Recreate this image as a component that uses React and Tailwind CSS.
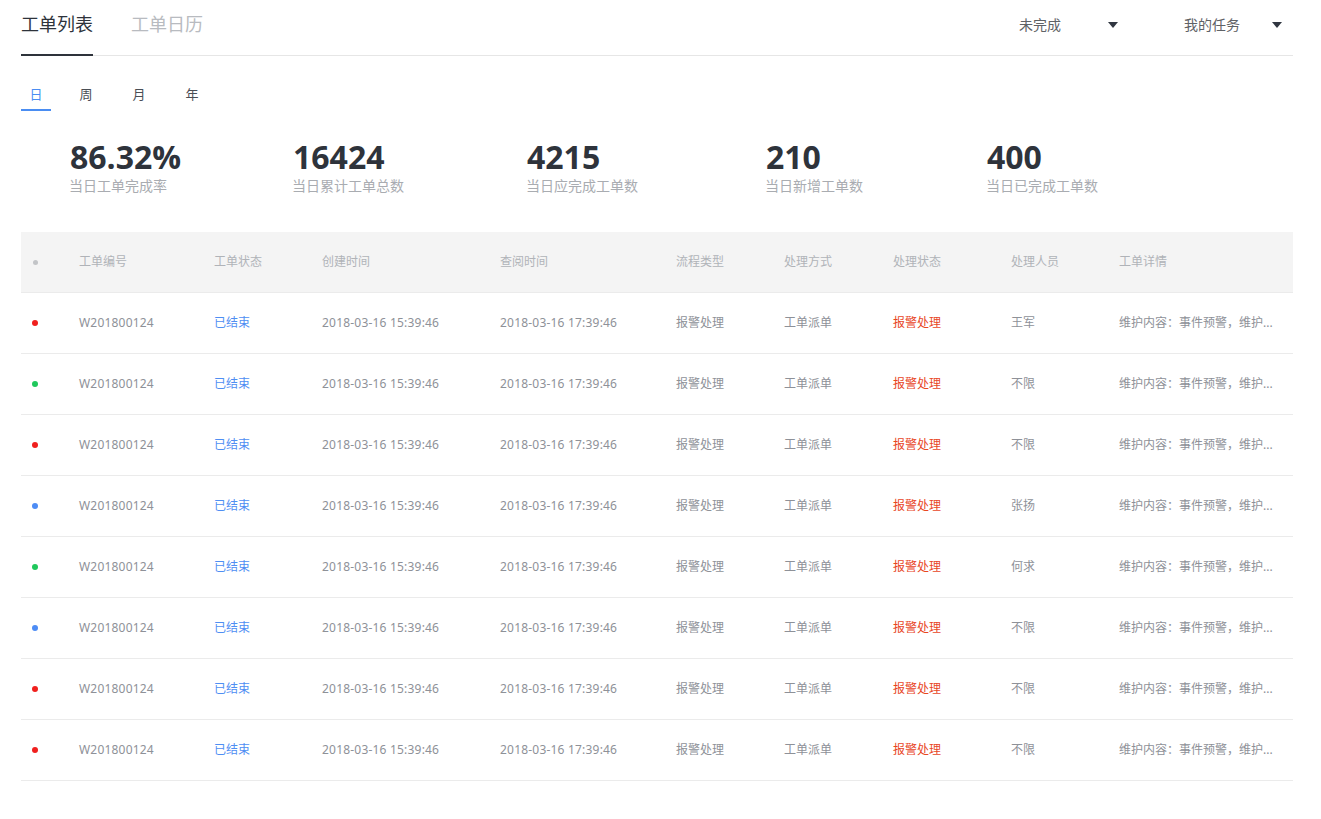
import React from "react";

const rows = [
  { dot: "bg-[#f0201e]", person: "王军" },
  { dot: "bg-[#1fc85c]", person: "不限" },
  { dot: "bg-[#f0201e]", person: "不限" },
  { dot: "bg-[#4d8cf5]", person: "张扬" },
  { dot: "bg-[#1fc85c]", person: "何求" },
  { dot: "bg-[#4d8cf5]", person: "不限" },
  { dot: "bg-[#f0201e]", person: "不限" },
  { dot: "bg-[#f0201e]", person: "不限" },
];

const stats = [
  { v: "86.32%", l: "当日工单完成率", w: "w-[223px]" },
  { v: "16424", l: "当日累计工单总数", w: "w-[234px]" },
  { v: "4215", l: "当日应完成工单数", w: "w-[239px]" },
  { v: "210", l: "当日新增工单数", w: "w-[221px]" },
  { v: "400", l: "当日已完成工单数", w: "w-[200px]" },
];

const grid =
  "grid grid-cols-[58px_135px_108px_178px_176px_108px_109px_118px_108px_1fr] items-center";

function Caret() {
  return (
    <svg width="10" height="6" viewBox="0 0 10 6" className="block">
      <path d="M0 0 L10 0 L5 6 Z" fill="#303640" />
    </svg>
  );
}

export default function App() {
  return (
    <div
      className="w-[1321px] min-h-[819px] bg-white pl-[21px] pr-[28px]"
      style={{ fontFamily: '"Noto Sans", "Noto Sans CJK SC", sans-serif' }}
    >
      {/* top tabs */}
      <div className="flex items-start justify-between border-b border-[#e6e6e6] h-[56px]">
        <div className="flex items-start gap-[38px]">
          <div className="h-[56px] pt-[11px] border-b-2 border-[#2e333b] text-[18px] leading-[26px] text-[#2e333b] w-[72px] -mb-px">
            工单列表
          </div>
          <div className="pt-[11px] text-[18px] leading-[26px] text-[#b8bbc0]">工单日历</div>
        </div>
        <div className="flex items-center gap-[66px] pt-[14px] pr-[11px]">
          <div className="flex items-center justify-between w-[99px] text-[14px] leading-[22px] text-[#5f6266]">
            <span>未完成</span>
            <Caret />
          </div>
          <div className="flex items-center justify-between w-[98px] text-[14px] leading-[22px] text-[#5f6266]">
            <span>我的任务</span>
            <Caret />
          </div>
        </div>
      </div>

      {/* period tabs */}
      <div className="flex mt-[28px] text-[13px] leading-[20px]">
        <div className="w-[30px] text-center pb-[5px] border-b-2 border-[#4a8df2] text-[#4a8df2]">日</div>
        <div className="ml-[20px] w-[30px] text-center pb-[5px] text-[#4a4e55]">周</div>
        <div className="ml-[23px] w-[30px] text-center pb-[5px] text-[#4a4e55]">月</div>
        <div className="ml-[23px] w-[30px] text-center pb-[5px] text-[#4a4e55]">年</div>
      </div>

      {/* stats */}
      <div className="flex pl-[48px] mt-[28px]">
        {stats.map((s) => (
          <div key={s.l} className={s.w}>
            <div
              className="text-[32px] leading-[36px] font-bold text-[#2e333b] pl-px"
              style={{ fontFamily: '"Open Sans", "Noto Sans", sans-serif' }}
            >
              {s.v}
            </div>
            <div className="mt-[1px] text-[14px] leading-[20px] text-[#a9acb1]">{s.l}</div>
          </div>
        ))}
      </div>

      {/* table */}
      <div className="mt-[36px] w-[1272px] text-[12px]">
        <div className={`${grid} h-[61px] bg-[#f4f4f4] border-b border-[#ebebeb] text-[#b0b3b8]`}>
          <div className="pl-[12px]">
            <div className="w-[5px] h-[5px] rounded-full bg-[#c2c4c7]" />
          </div>
          <div>工单编号</div>
          <div>工单状态</div>
          <div>创建时间</div>
          <div>查阅时间</div>
          <div>流程类型</div>
          <div>处理方式</div>
          <div>处理状态</div>
          <div>处理人员</div>
          <div>工单详情</div>
        </div>
        {rows.map((r, i) => (
          <div key={i} className={`${grid} h-[61px] border-b border-[#ebebeb] text-[#8e9198]`}>
            <div className="pl-[11px]">
              <div className={`w-[6px] h-[6px] rounded-full ${r.dot}`} />
            </div>
            <div className="tracking-[0.2px]">W201800124</div>
            <div className="text-[#4f8ef3]">已结束</div>
            <div className="tracking-[0.2px]">2018-03-16 15:39:46</div>
            <div className="tracking-[0.2px]">2018-03-16 17:39:46</div>
            <div>报警处理</div>
            <div>工单派单</div>
            <div className="text-[#e8461f]">报警处理</div>
            <div>{r.person}</div>
            <div>维护内容：事件预警，维护...</div>
          </div>
        ))}
      </div>
    </div>
  );
}
